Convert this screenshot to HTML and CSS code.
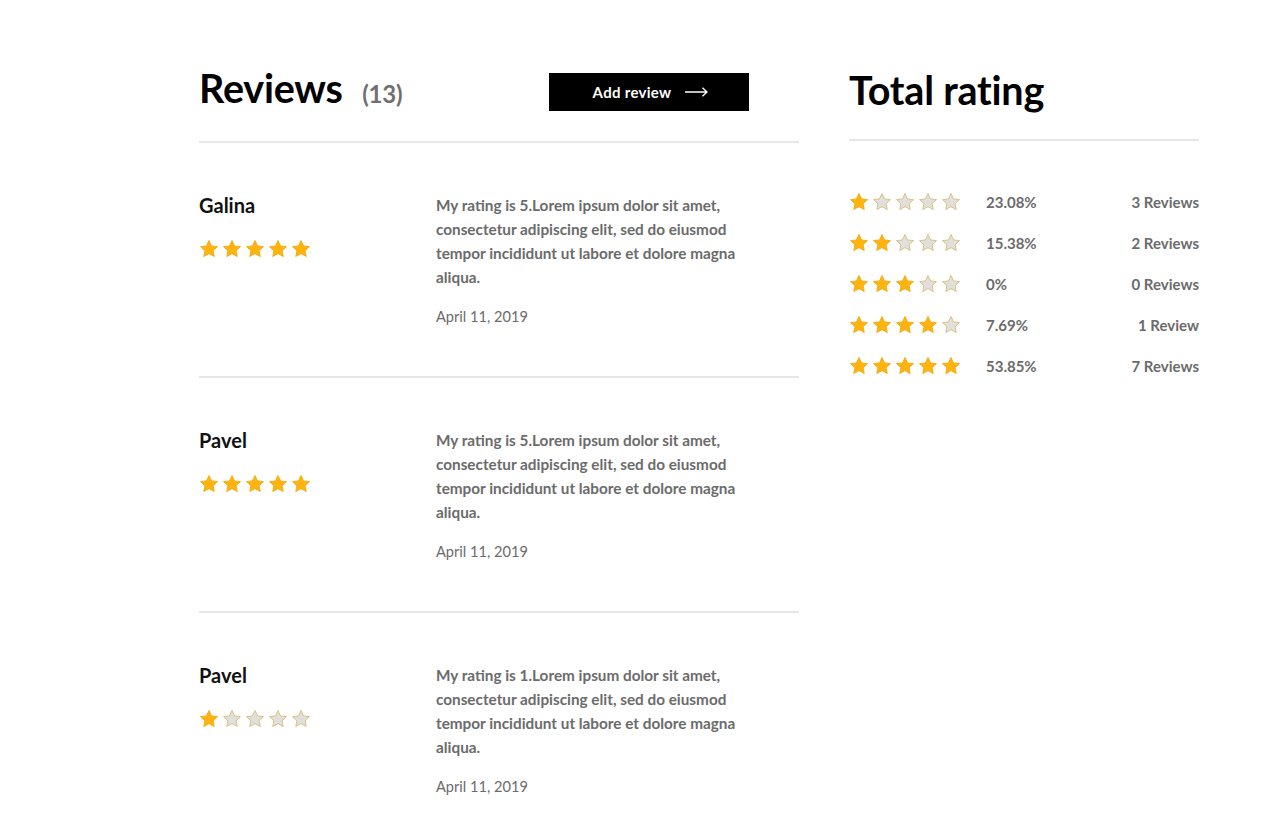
FILE: index.html
```html
<!DOCTYPE html>
<html lang="en">
<head>
<meta charset="utf-8">
<title>Reviews</title>
<link rel="stylesheet" href="styles.css">
</head>
<body>
<svg width="0" height="0" style="position:absolute">
  <defs>
    <symbol id="star" viewBox="0 0 24 24">
      <path d="M12 1.8l3.05 6.5 7.1.86-5.25 4.85 1.4 7.03L12 17.55 5.7 21.04l1.4-7.03L1.85 9.16l7.1-.86z"/>
    </symbol>
  </defs>
</svg>
<main class="page">
  <section class="reviews">
    <header class="reviews-head">
      <h1 class="title">Reviews <span class="count">(13)</span></h1>
      <button class="add-btn">Add review
        <svg class="arrow" width="24" height="10" viewBox="0 0 24 10"><path d="M0 5h22M17.5 0.8L22 5l-4.5 4.2" fill="none" stroke="#fff" stroke-width="1.3"/></svg>
      </button>
    </header>

    <article class="review">
      <div class="review-author">
        <div class="name">Galina</div>
        <div class="stars">
          <svg class="st on"><use href="#star"/></svg><svg class="st on"><use href="#star"/></svg><svg class="st on"><use href="#star"/></svg><svg class="st on"><use href="#star"/></svg><svg class="st on"><use href="#star"/></svg>
        </div>
      </div>
      <div class="review-body">
        <p class="text">My rating is 5.Lorem ipsum dolor sit amet, consectetur adipiscing elit, sed do eiusmod tempor incididunt ut labore et dolore magna aliqua.</p>
        <div class="date">April 11, 2019</div>
      </div>
    </article>

    <article class="review">
      <div class="review-author">
        <div class="name">Pavel</div>
        <div class="stars">
          <svg class="st on"><use href="#star"/></svg><svg class="st on"><use href="#star"/></svg><svg class="st on"><use href="#star"/></svg><svg class="st on"><use href="#star"/></svg><svg class="st on"><use href="#star"/></svg>
        </div>
      </div>
      <div class="review-body">
        <p class="text">My rating is 5.Lorem ipsum dolor sit amet, consectetur adipiscing elit, sed do eiusmod tempor incididunt ut labore et dolore magna aliqua.</p>
        <div class="date">April 11, 2019</div>
      </div>
    </article>

    <article class="review">
      <div class="review-author">
        <div class="name">Pavel</div>
        <div class="stars">
          <svg class="st on"><use href="#star"/></svg><svg class="st"><use href="#star"/></svg><svg class="st"><use href="#star"/></svg><svg class="st"><use href="#star"/></svg><svg class="st"><use href="#star"/></svg>
        </div>
      </div>
      <div class="review-body">
        <p class="text">My rating is 1.Lorem ipsum dolor sit amet, consectetur adipiscing elit, sed do eiusmod tempor incididunt ut labore et dolore magna aliqua.</p>
        <div class="date">April 11, 2019</div>
      </div>
    </article>
  </section>

  <aside class="total">
    <header class="total-head">
      <h2 class="title">Total rating</h2>
    </header>
    <ul class="dist">
      <li class="dist-row">
        <div class="stars"><svg class="st on"><use href="#star"/></svg><svg class="st"><use href="#star"/></svg><svg class="st"><use href="#star"/></svg><svg class="st"><use href="#star"/></svg><svg class="st"><use href="#star"/></svg></div>
        <span class="pct">23.08%</span><span class="num">3 Reviews</span>
      </li>
      <li class="dist-row">
        <div class="stars"><svg class="st on"><use href="#star"/></svg><svg class="st on"><use href="#star"/></svg><svg class="st"><use href="#star"/></svg><svg class="st"><use href="#star"/></svg><svg class="st"><use href="#star"/></svg></div>
        <span class="pct">15.38%</span><span class="num">2 Reviews</span>
      </li>
      <li class="dist-row">
        <div class="stars"><svg class="st on"><use href="#star"/></svg><svg class="st on"><use href="#star"/></svg><svg class="st on"><use href="#star"/></svg><svg class="st"><use href="#star"/></svg><svg class="st"><use href="#star"/></svg></div>
        <span class="pct">0%</span><span class="num">0 Reviews</span>
      </li>
      <li class="dist-row">
        <div class="stars"><svg class="st on"><use href="#star"/></svg><svg class="st on"><use href="#star"/></svg><svg class="st on"><use href="#star"/></svg><svg class="st on"><use href="#star"/></svg><svg class="st"><use href="#star"/></svg></div>
        <span class="pct">7.69%</span><span class="num">1 Review</span>
      </li>
      <li class="dist-row">
        <div class="stars"><svg class="st on"><use href="#star"/></svg><svg class="st on"><use href="#star"/></svg><svg class="st on"><use href="#star"/></svg><svg class="st on"><use href="#star"/></svg><svg class="st on"><use href="#star"/></svg></div>
        <span class="pct">53.85%</span><span class="num">7 Reviews</span>
      </li>
    </ul>
  </aside>
</main>
</body>
</html>
```

FILE: styles.css
```css
* { box-sizing: border-box; }
html, body { margin: 0; padding: 0; background: #fff; }
body {
  font-family: "Lato", "Liberation Sans", sans-serif;
  color: #000;
}
.page {
  display: flex;
  gap: 50px;
  padding: 0 0 0 199px;
  width: 1287px;
}
.reviews { width: 600px; flex: none; }
.total { width: 350px; flex: none; }

.reviews-head, .total-head {
  display: flex;
  align-items: center;
  height: 143px;
  padding-top: 41px;
  border-bottom: 2px solid #e6e6e6;
}
.total-head { height: 141px; }
.title {
  margin: 0;
  font-size: 39.5px;
  font-weight: 700;
  letter-spacing: -0.2px;
  line-height: 44px;
  flex: 1;
}
.count {
  font-size: 24px;
  font-weight: 700;
  color: #707070;
  margin-left: 10px;
}
.add-btn {
  width: 200px;
  height: 38px;
  margin: 2px 50px 0 0;
  background: #000;
  color: #fff;
  border: 0;
  font-family: inherit;
  font-size: 15px;
  font-weight: 700;
  letter-spacing: 0.3px;
  display: flex;
  align-items: center;
  justify-content: center;
  gap: 14px;
  padding: 0 0 0 4px;
  cursor: pointer;
}
.arrow { display: block; }

.review {
  display: flex;
  padding: 50px 0 47px;
  border-bottom: 2px solid #e6e6e6;
}
.review:last-child { border-bottom: 0; }
.review-author { width: 237px; flex: none; }
.name {
  font-size: 20px;
  font-weight: 700;
  line-height: 24px;
  color: #111;
}
.stars { display: flex; gap: 3px; }
.review-author .stars { margin-top: 22px; }
.st {
  width: 20px;
  height: 20px;
  fill: #e0dfdc;
  stroke: #d9bd7a;
  stroke-width: 1.1;
}
.st.on { fill: #ffb30f; stroke: #f2ab10; }

.review-body { width: 315px; }
.text {
  margin: 0;
  font-size: 15.3px;
  font-weight: 700;
  line-height: 24px;
  color: #6b6b6b;
}
.date {
  margin-top: 16px;
  font-size: 14.6px;
  line-height: 24px;
  color: #6b6b6b;
}

.dist { list-style: none; margin: 0; padding: 40px 0 0; }
.dist-row {
  display: flex;
  align-items: center;
  height: 41px;
  font-size: 15px;
  font-weight: 700;
  color: #6b6b6b;
}
.dist-row .stars { width: 137px; flex: none; }
.pct { flex: 1; }
.num { text-align: right; }
```
